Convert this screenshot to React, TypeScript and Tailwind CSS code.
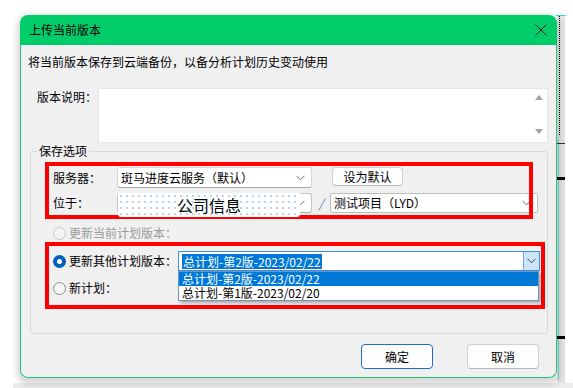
import React from "react";

function Chevron({ color = "#6b6b6b" }: { color?: string }) {
  return (
    <svg width="9" height="6" viewBox="0 0 9 6">
      <path d="M0.5 0.8 L4.5 4.8 L8.5 0.8" fill="none" stroke={color} strokeWidth="1" />
    </svg>
  );
}

function RadioOff({ disabled = false }: { disabled?: boolean }) {
  return (
    <span
      className={
        disabled
          ? "w-[13px] h-[13px] rounded-full border border-[#c8c8c8] bg-[#f3f3f3] shrink-0"
          : "w-[13px] h-[13px] rounded-full border border-[#8a8a8a] bg-[#f7f7f7] shrink-0"
      }
    />
  );
}

function RadioOn() {
  return (
    <span className="w-[13px] h-[13px] rounded-full bg-[#005fb8] flex items-center justify-center shrink-0">
      <span className="w-[5px] h-[5px] rounded-full bg-white" />
    </span>
  );
}

export default function App() {
  return (
    <div className="relative w-[573px] h-[388px] bg-white overflow-hidden font-['Noto_Sans_CJK_SC',sans-serif] text-[12px] leading-[16px] text-black">
      {/* background clutter on the right */}
      <div className="absolute left-[557px] top-[15px] w-[8px] h-[368px] bg-[#e4e4e4]" />
      <div className="absolute left-[559px] top-[15px] w-[1px] h-[120px] border-l border-dotted border-black" />
      <div className="absolute left-[556px] top-[15px] w-[10px] h-[1px] bg-[#3ad6e6]" />
      <div className="absolute left-[558px] top-[140px] w-[1px] h-[240px] bg-[#7fd9e0]" />
      <div className="absolute left-[557px] top-[143px] w-[8px] h-[1px] bg-[#333]" />
      <div className="absolute left-[557px] top-[177px] w-[8px] h-[3px] bg-black" />
      <div className="absolute left-[557px] top-[336px] w-[8px] h-[3px] bg-black" />
      <div className="absolute left-[13px] top-[383px] w-[560px] h-[5px] bg-[#ececec]" />

      <div className="pt-[15px] pl-[20px]">
        <div className="relative w-[537px] h-[363px] flex flex-col rounded-[8px] shadow-[0_3px_6px_3px_rgba(0,0,0,0.16)]">
          {/* title bar */}
          <div className="h-[30px] shrink-0 bg-[#00cc6a] rounded-t-[8px] flex items-center justify-between pl-[9px] pr-[10px]">
            <span>上传当前版本</span>
            <svg width="12" height="12" viewBox="0 0 12 12">
              <path d="M0.5 0.5 L11.5 11.5 M11.5 0.5 L0.5 11.5" stroke="#1a1a1a" strokeWidth="1" />
            </svg>
          </div>

          {/* body */}
          <div className="flex-1 flex flex-col bg-[#f0f0f0] border border-t-0 border-[#1fc77a] rounded-b-[8px]">
            <div className="pt-[9px] pl-[7px] h-[25px]">将当前版本保存到云端备份，以备分析计划历史变动使用</div>

            <div className="mt-[18px] flex pl-[16px]">
              <div className="w-[61px] pt-[1px]">版本说明：</div>
              <div className="w-[450px] h-[55px] bg-white border border-[#e6e6e6] flex justify-end">
                <div className="w-[16px] flex flex-col items-center justify-between pt-[6px] pb-[8px]">
                  <svg width="8" height="5" viewBox="0 0 8 5">
                    <path d="M4 0 L8 5 L0 5 Z" fill="#a3a3a3" />
                  </svg>
                  <svg width="8" height="5" viewBox="0 0 8 5">
                    <path d="M0 0 L8 0 L4 5 Z" fill="#a3a3a3" />
                  </svg>
                </div>
              </div>
            </div>

            {/* group box */}
            <div className="relative mt-[8px] ml-[9px] w-[518px] h-[183px] border border-[#d9d9d9] rounded-[3px] pt-[15px] pl-[22px]">
              <div className="absolute left-[6px] top-[-9px] px-[2px] bg-[#f0f0f0]">保存选项</div>

              {/* server row */}
              <div className="flex items-start">
                <div className="w-[64px] h-[21px] flex items-center">服务器：</div>
                <div className="w-[195px] h-[21px] bg-white border border-[#d6d6d6] border-b-[#a8a8a8] rounded-[3px] flex items-center justify-between pl-[3px] pr-[6px]">
                  <span>斑马进度云服务（默认）</span>
                  <Chevron />
                </div>
                <div className="ml-[20px] w-[71px] h-[19px] bg-[#fdfdfd] border border-[#d0d0d0] border-b-[#b5b5b5] rounded-[4px] flex items-center justify-center">
                  设为默认
                </div>
              </div>

              {/* location row */}
              <div className="mt-[5px] flex items-start">
                <div className="w-[64px] h-[20px] flex items-center">位于：</div>
                <div className="w-[195px] h-[20px] bg-white border border-[#c4c4c4] border-b-[#a8a8a8] rounded-[3px] flex items-center justify-end pr-[6px]">
                  <Chevron />
                </div>
                <div className="w-[18px] h-[20px] flex items-center justify-center text-[#4d76b3] italic">/</div>
                <div className="w-[208px] h-[20px] bg-white border border-[#bdbdbd] rounded-[2px] flex items-center justify-between pl-[3px] pr-[6px]">
                  <span>测试项目（LYD）</span>
                  <Chevron />
                </div>
              </div>

              {/* radio disabled */}
              <div className="mt-[12px] h-[16px] flex items-center gap-[3px] text-[#9a9a9a]">
                <RadioOff disabled />
                <span>更新当前计划版本：</span>
              </div>

              {/* radio selected + combo */}
              <div className="mt-[10px] flex items-center">
                <div className="w-[125px] flex items-center gap-[3px]">
                  <RadioOn />
                  <span>更新其他计划版本：</span>
                </div>
                <div className="w-[362px] h-[20px] bg-white border border-[#3f8fdc] flex items-center justify-between pl-[3px]">
                  <span className="bg-[#0078d7] text-white leading-[15px] px-[1px]">总计划-第2版-2023/02/22</span>
                  <div className="w-[16px] h-full bg-[#cce4f7] border-l border-[#6fa8e0] flex items-center justify-center">
                    <Chevron color="#444" />
                  </div>
                </div>
              </div>

              {/* radio new plan */}
              <div className="mt-[9px] h-[16px] flex items-center gap-[3px]">
                <RadioOff />
                <span>新计划：</span>
              </div>
            </div>

            {/* buttons */}
            <div className="mt-[10px] flex justify-end gap-[34px] pr-[17px]">
              <div className="w-[72px] h-[25px] bg-[#fdfdfd] border border-[#1d6fc4] rounded-[4px] flex items-center justify-center">确定</div>
              <div className="w-[72px] h-[25px] bg-[#fdfdfd] border border-[#d0d0d0] border-b-[#b8b8b8] rounded-[4px] flex items-center justify-center">取消</div>
            </div>
          </div>

          {/* red annotation boxes */}
          <div className="absolute left-[25px] top-[147px] w-[488px] h-[57px] border-4 border-[#ff0000]" />
          <div className="absolute left-[25px] top-[227px] w-[500px] h-[67px] border-4 border-[#ff0000]" />

          {/* masked company overlay */}
          <div className="absolute left-[98px] top-[178px] w-[182px] h-[24px] bg-white rounded-b-[3px] [background-image:radial-gradient(circle,#7fb2e6_0.55px,transparent_0.9px)] [background-size:6px_6px] flex items-center justify-center">
            <span className="text-[16px] leading-[20px]">公司信息</span>
          </div>

          {/* dropdown list */}
          <div className="absolute left-[158px] top-[256px] w-[361px] h-[30px] bg-white border border-[#6f93c2] shadow-[2px_2px_3px_rgba(0,0,0,0.3)] flex flex-col">
            <div className="h-[14px] bg-[#0078d7] text-white leading-[14px] pl-[3px]">总计划-第2版-2023/02/22</div>
            <div className="h-[14px] leading-[14px] pl-[3px]">总计划-第1版-2023/02/20</div>
          </div>
        </div>
      </div>
    </div>
  );
}
